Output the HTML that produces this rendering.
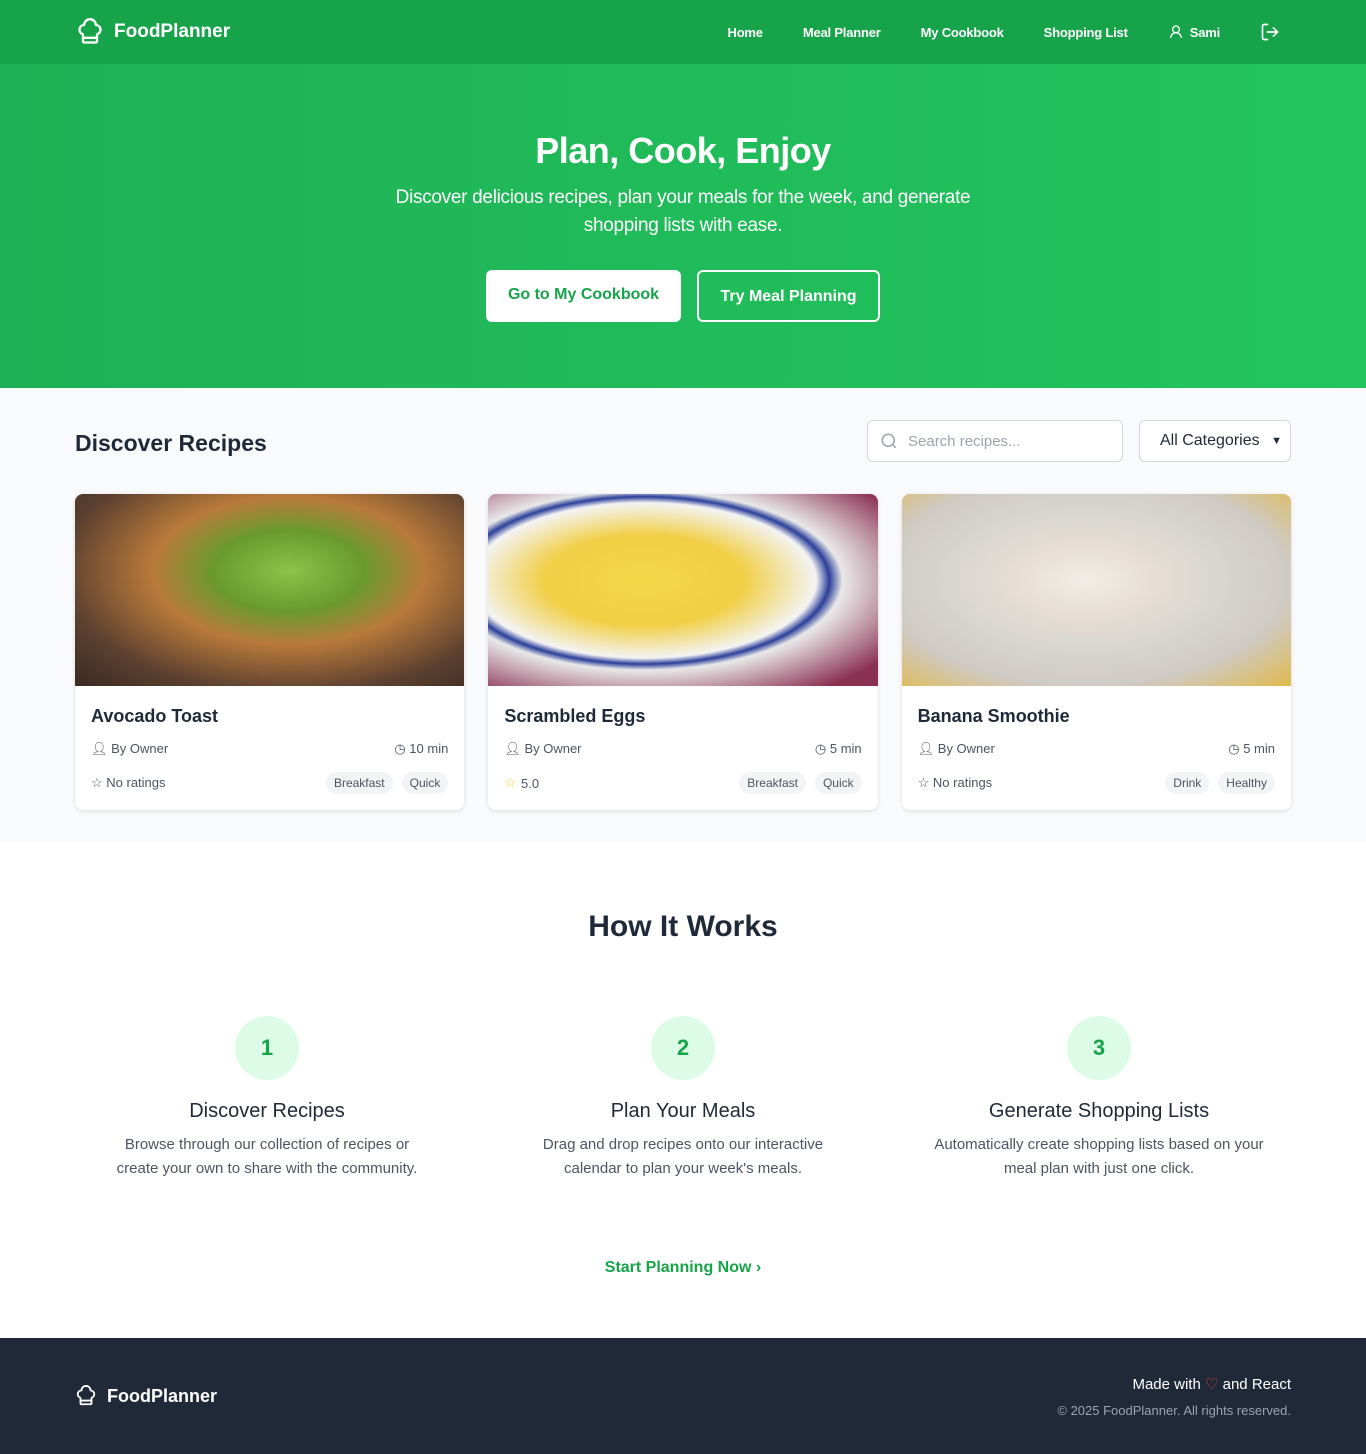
<!DOCTYPE html>
<html><head><meta charset="utf-8"><style>
*{box-sizing:border-box;margin:0;padding:0}
body{width:1366px;font-family:"Liberation Sans",sans-serif;color:#1f2937;background:#fff}
nav{height:64px;background:#16a34a;display:flex;align-items:center;padding:0 76px;color:#fff;position:relative}
.logo{display:flex;align-items:center;gap:10px;font-size:19px;font-weight:bold}
.links{position:absolute;right:86px;top:0;height:64px;display:flex;align-items:center;font-size:13px;font-weight:bold;letter-spacing:-.2px}
.links span{margin-left:40px;display:flex;align-items:center;gap:6px}
.hero{height:324px;background:linear-gradient(90deg,#1eb155,#22c55e);text-align:center;color:#fff;padding-top:66px}
.hero h1{font-size:36px;font-weight:bold;margin-bottom:12px;letter-spacing:-.5px}
.hero p{font-size:19px;line-height:28px;width:640px;margin:0 auto;letter-spacing:-.3px}
.btns{margin-top:30px;display:flex;justify-content:center;gap:16px}
.b1{width:195px;height:52px;background:#fff;color:#16a34a;border-radius:6px;font-weight:bold;font-size:16px;line-height:50px}
.b2{width:183px;height:52px;border:2px solid #fff;color:#fff;border-radius:6px;font-weight:bold;font-size:16px;line-height:50px}
.disc{background:#f9fafb;height:454px;padding:32px 75px 0}
.dh{display:flex;align-items:center;height:42px}
.dh h2{font-size:23px;font-weight:bold;flex:1;padding-top:4px}
.search{width:256px;height:42px;border:1px solid #d1d5db;border-radius:6px;background:#fff;display:flex;align-items:center;padding-left:12px;gap:10px;color:#9ca3af;font-size:15px}
.sel{width:152px;height:42px;border:1px solid #d1d5db;border-radius:6px;background:#fff;margin-left:16px;display:flex;align-items:center;justify-content:space-between;padding:0 8px 0 20px;font-size:16px}
.cards{display:flex;gap:24px;margin-top:32px}
.card{width:389.5px;height:316px;background:#fff;border-radius:8px;box-shadow:0 1px 4px rgba(0,0,0,.12);overflow:hidden}
.img{height:192px}
.cb{padding:20px 16px 14px}
.cb h3{font-size:18px;font-weight:bold;margin-bottom:12px}
.row{display:flex;justify-content:space-between;align-items:center;font-size:13px;color:#4b5563;height:20px;margin-bottom:14px}
.row span{display:flex;align-items:center;gap:5px}
.tag{background:#f3f4f6;border-radius:12px;padding:4px 8px;font-size:12px;margin-left:4px}
.how{height:496px;text-align:center;padding-top:68px}
.how h2{font-size:30px;font-weight:bold}
.steps{display:flex;justify-content:space-between;padding:0 75px;margin-top:72px}
.step{width:384px}
.num{width:64px;height:64px;border-radius:50%;background:#dcfce7;color:#16a34a;font-size:22px;font-weight:bold;line-height:64px;margin:0 auto 20px}
.step h3{font-size:20px;font-weight:normal;margin-bottom:10px}
.step p{font-size:15px;line-height:24px;color:#4b5563;width:330px;margin:0 auto}
.start{margin-top:78px;color:#16a34a;font-weight:bold;font-size:16px}
footer{height:116px;background:#1f2937;color:#fff;display:flex;align-items:center;justify-content:space-between;padding:0 75px}
.fr{text-align:right;font-size:15px}
.fr div+div{color:#9ca3af;font-size:13px;margin-top:10px}
</style></head><body>
<nav><div class="logo"><svg width="28" height="28" viewBox="0 0 24 24" fill="none" stroke="#fff" stroke-width="2" stroke-linecap="round" stroke-linejoin="round"><path d="M17 21a1 1 0 0 0 1-1v-5.35c0-.46.32-.85.74-1.05A4 4 0 0 0 17 6a5 5 0 0 0-10 0 4 4 0 0 0-1.74 7.6c.42.2.74.59.74 1.05V20a1 1 0 0 0 1 1Z"/><path d="M6 17h12"/></svg>FoodPlanner</div>
<div class="links"><span>Home</span><span>Meal Planner</span><span>My Cookbook</span><span>Shopping List</span><span><svg width="16" height="16" viewBox="0 0 24 24" fill="none" stroke="#fff" stroke-width="2"><circle cx="12" cy="8" r="5"/><path d="M20 21a8 8 0 0 0-16 0"/></svg>Sami</span><span><svg width="20" height="20" viewBox="0 0 24 24" fill="none" stroke="#fff" stroke-width="2" stroke-linecap="round"><path d="M9 21H5a2 2 0 0 1-2-2V5a2 2 0 0 1 2-2h4M16 17l5-5-5-5M21 12H9"/></svg></span></div></nav>
<div class="hero"><h1>Plan, Cook, Enjoy</h1><p>Discover delicious recipes, plan your meals for the week, and generate shopping lists with ease.</p>
<div class="btns"><div class="b1">Go to My Cookbook</div><div class="b2">Try Meal Planning</div></div></div>
<div class="disc"><div class="dh"><h2>Discover Recipes</h2><div class="search"><svg width="18" height="18" viewBox="0 0 24 24" fill="none" stroke="#9ca3af" stroke-width="2"><circle cx="11" cy="11" r="8"/><path d="m21 21-4.3-4.3"/></svg>Search recipes...</div><div class="sel">All Categories <span style="font-size:11px">▼</span></div></div>
<div class="cards">
<div class="card"><div class="img" style="background:radial-gradient(ellipse at 55% 40%,#8bc34a 0,#6a9a2e 25%,#b97a3a 45%,#5c4030 75%,#3a2a20 100%)"></div><div class="cb"><h3>Avocado Toast</h3><div class="row"><span>👤︎ By Owner</span><span>◷ 10 min</span></div><div class="row"><span>☆ No ratings</span><span><i class="tag" style="font-style:normal">Breakfast</i><i class="tag" style="font-style:normal">Quick</i></span></div></div></div>
<div class="card"><div class="img" style="background:radial-gradient(ellipse at 40% 45%,#f5d649 0,#f2cf45 30%,#f3f3f3 52%,#2b3f9a 56%,#e8e8e8 60%,#8a3050 90%)"></div><div class="cb"><h3>Scrambled Eggs</h3><div class="row"><span>👤︎ By Owner</span><span>◷ 5 min</span></div><div class="row"><span><b style="color:#facc15;font-weight:normal">☆</b> 5.0</span><span><i class="tag" style="font-style:normal">Breakfast</i><i class="tag" style="font-style:normal">Quick</i></span></div></div></div>
<div class="card"><div class="img" style="background:radial-gradient(ellipse at 47% 45%,#f2ede6 0,#e6ddd3 25%,#d9d6d2 45%,#cfcac4 70%,#e0b94a 100%)"></div><div class="cb"><h3>Banana Smoothie</h3><div class="row"><span>👤︎ By Owner</span><span>◷ 5 min</span></div><div class="row"><span>☆ No ratings</span><span><i class="tag" style="font-style:normal">Drink</i><i class="tag" style="font-style:normal">Healthy</i></span></div></div></div>
</div></div>
<div class="how"><h2>How It Works</h2><div class="steps">
<div class="step"><div class="num">1</div><h3>Discover Recipes</h3><p>Browse through our collection of recipes or create your own to share with the community.</p></div>
<div class="step"><div class="num">2</div><h3>Plan Your Meals</h3><p>Drag and drop recipes onto our interactive calendar to plan your week's meals.</p></div>
<div class="step"><div class="num">3</div><h3>Generate Shopping Lists</h3><p>Automatically create shopping lists based on your meal plan with just one click.</p></div>
</div><div class="start">Start Planning Now ›</div></div>
<footer><div class="logo" style="font-size:18px"><svg width="22" height="22" viewBox="0 0 24 24" fill="none" stroke="#fff" stroke-width="2" stroke-linecap="round" stroke-linejoin="round"><path d="M17 21a1 1 0 0 0 1-1v-5.35c0-.46.32-.85.74-1.05A4 4 0 0 0 17 6a5 5 0 0 0-10 0 4 4 0 0 0-1.74 7.6c.42.2.74.59.74 1.05V20a1 1 0 0 0 1 1Z"/><path d="M6 17h12"/></svg>FoodPlanner</div>
<div class="fr"><div>Made with <span style="color:#ef4444">♡</span> and React</div><div>© 2025 FoodPlanner. All rights reserved.</div></div></footer>
</body></html>
